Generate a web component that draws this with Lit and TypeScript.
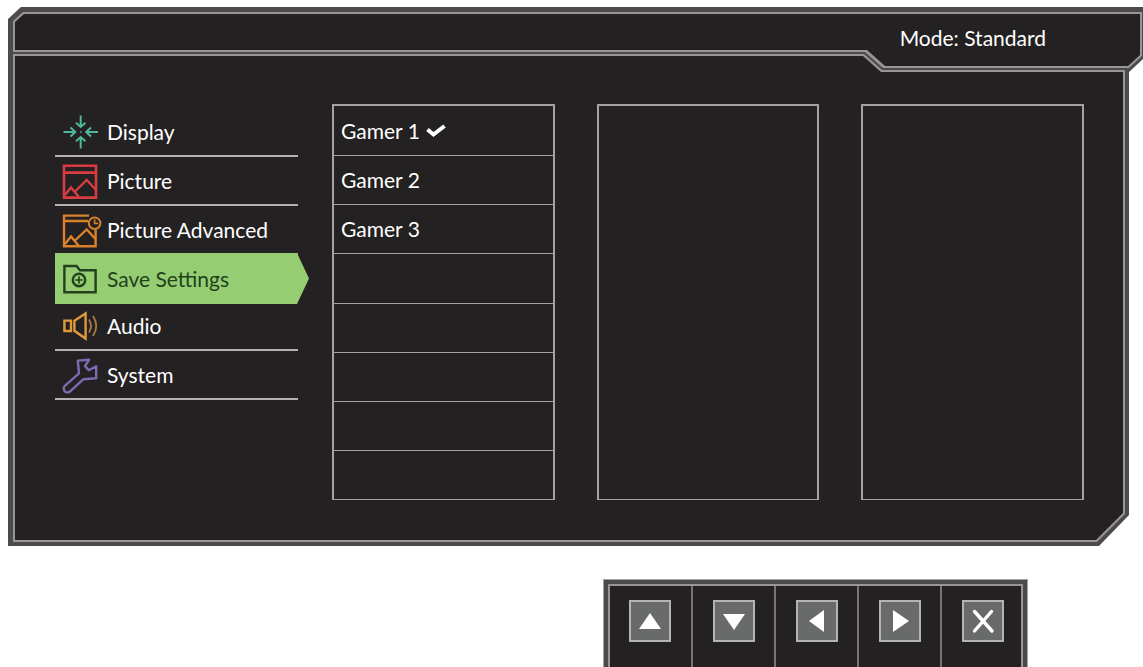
import { LitElement, html, css, svg } from "lit";
import { customElement, property, state } from "lit/decorators.js";
import { classMap } from "lit/directives/class-map.js";

const icons: Record<string, unknown> = {
  display: svg`<g stroke="#4fb79c" stroke-width="2">
    <path d="M1.5 20H13M8.5 15.5L13.3 20L8.5 24.5M36 20H24.5M29 15.5L24.2 20L29 24.5"/>
    <path d="M18.7 3.5V15M14 10.7L18.7 15L23.4 10.7M18.7 36.5V25M14 29.3L18.7 25L23.4 29.3"/>
    <path d="M18 20H19.5" stroke-width="1.5"/></g>`,
  picture: svg`<g stroke="#d63c41" stroke-width="2.6">
    <path d="M2 4.8H34V36.6H2ZM2 11.6H34"/>
    <path d="M3 34L9 26.5L16.5 35.5M12.5 31L24.7 19L34 29" stroke-width="2.4"/></g>`,
  advanced: svg`<g stroke="#d9822b" stroke-width="2.4">
    <path d="M27 5.6H2V36.2H33.6V20M2 11H26"/>
    <path d="M3 34L9 26.5L16.5 35.5M12.5 31L24.7 19.5L33.5 29"/>
    <circle cx="32.6" cy="13.2" r="5.8" stroke-width="2"/>
    <path d="M32.6 9.5V13.4H36" stroke-width="1.6"/></g>`,
  save: svg`<g stroke="#21421a" stroke-width="2.4">
    <path d="M2.4 7H14.5L18 11.2H33.6V33.2H2.4Z"/>
    <circle cx="17" cy="21" r="6.2"/>
    <path d="M17 17.3V24.7M13.3 21H20.7" stroke-width="1.6"/></g>`,
  audio: svg`<g stroke="#e09a3c" stroke-width="2.4">
    <path d="M2.4 14.6H9V25H2.4ZM12.4 14.8L23.6 7.5V32.6L12.4 24.8Z"/>
    <path d="M27 13.5Q31 20 27 26.5M31 10Q37.5 20 31 30" stroke="#a97c42" stroke-width="1.8"/></g>`,
  system: svg`<path stroke="#8069b3" stroke-width="2.4" stroke-linejoin="round"
    d="M15.8 5.6L27 4.8L23 11.2L26.8 15.2L34.2 11.2V23.2L21.5 24.2L8.4 36.2A3.8 3.8 0 0 1 2.8 30.8L17 18.4Z"/>`,
};

const menu = [
  { icon: "display", label: "Display" },
  { icon: "picture", label: "Picture" },
  { icon: "advanced", label: "Picture Advanced" },
  { icon: "save", label: "Save Settings" },
  { icon: "audio", label: "Audio" },
  { icon: "system", label: "System" },
];

const options = ["Gamer 1", "Gamer 2", "Gamer 3", "", "", "", "", ""];

const keys = [
  { label: "Up", shape: svg`<path d="M17 9L28 25H6Z"/>` },
  { label: "Down", shape: svg`<path d="M6 10H28L17 26Z"/>` },
  { label: "Left", shape: svg`<path d="M24 6V28L9 17Z"/>` },
  { label: "Right", shape: svg`<path d="M10 6V28L26 17Z"/>` },
  {
    label: "Exit",
    shape: svg`<path d="M8.5 7.5L26 27M25.5 7.5L8.5 27" stroke="#fff" stroke-width="3.4" stroke-linecap="round"/>`,
  },
];

@customElement("osd-frame")
class OsdFrame extends LitElement {
  static styles = css`
    :host {
      display: grid;
    }
    .layer,
    .content {
      grid-area: 1 / 1;
      min-width: 0;
    }
    .content {
      z-index: 1;
    }
    .edge {
      background: #4c4a4b;
      clip-path: polygon(0 12px, 13px 0, 100% 0, 100% 52px, calc(100% - 14px) 65px,
        calc(100% - 14px) calc(100% - 31px), calc(100% - 44px) 100%, 0 100%);
    }
    .line {
      background: #979596;
    }
    .fill {
      background: #242122;
    }
    .line.head {
      clip-path: polygon(5px 14px, 15px 5px, calc(100% - 1px) 5px, calc(100% - 1px) 49px,
        calc(100% - 14px) 61px, calc(100% - 260px) 61px, calc(100% - 278px) 45px, 5px 45px);
    }
    .fill.head {
      clip-path: polygon(7px 15px, 16px 7px, calc(100% - 3px) 7px, calc(100% - 3px) 48px,
        calc(100% - 15px) 59px, calc(100% - 258px) 59px, calc(100% - 276px) 43px, 7px 43px);
    }
    .line.body {
      clip-path: polygon(5px 47px, calc(100% - 279px) 47px, calc(100% - 261px) 63px,
        calc(100% - 18px) 63px, calc(100% - 18px) calc(100% - 32px),
        calc(100% - 46px) calc(100% - 4px), 5px calc(100% - 4px));
    }
    .fill.body {
      clip-path: polygon(7px 49px, calc(100% - 280px) 49px, calc(100% - 262px) 65px,
        calc(100% - 20px) 65px, calc(100% - 20px) calc(100% - 33px),
        calc(100% - 47px) calc(100% - 6px), 7px calc(100% - 6px));
    }
  `;
  render() {
    return html`
      <div class="layer edge"></div>
      <div class="layer line head"></div>
      <div class="layer fill head"></div>
      <div class="layer line body"></div>
      <div class="layer fill body"></div>
      <div class="content"><slot></slot></div>
    `;
  }
}

@customElement("osd-menu")
class OsdMenu extends LitElement {
  @property({ type: Number }) selected = 0;
  static styles = css`
    :host {
      display: block;
    }
    .list {
      list-style: none;
      margin: 0;
      padding: 0;
    }
    .item {
      box-sizing: border-box;
      height: 49px;
      border-bottom: 2px solid #b3b1b2;
    }
    .button {
      display: flex;
      align-items: center;
      gap: 5px;
      box-sizing: border-box;
      width: 100%;
      height: 100%;
      border: 0;
      padding: 0 0 0 7px;
      background: none;
      color: #fff;
      font: inherit;
      white-space: nowrap;
      text-align: left;
      cursor: pointer;
    }
    .button.active {
      width: calc(100% + 11px);
      height: 51px;
      margin: -2px 0;
      background: #96cd73;
      color: #21421a;
      clip-path: polygon(0 0, calc(100% - 12px) 0, 100% 50%, calc(100% - 12px) 100%, 0 100%);
    }
    .icon {
      flex: none;
      width: 40px;
      height: 40px;
      fill: none;
    }
  `;
  render() {
    return html`<ul class="list">
      ${menu.map(
        (m, i) => html`<li class="item">
          <button
            class=${classMap({ button: true, active: i === this.selected })}
            @click=${() => this.dispatchEvent(new CustomEvent("pick", { detail: i }))}
          >
            <svg class="icon" viewBox="0 0 40 40" aria-hidden="true">${icons[m.icon]}</svg>
            <span>${m.label}</span>
          </button>
        </li>`
      )}
    </ul>`;
  }
}

@customElement("app-root")
class AppRoot extends LitElement {
  @state() private section = 3;
  @state() private slotIndex = 0;

  static styles = css`
    :host {
      display: flex;
      flex-direction: column;
      box-sizing: border-box;
      min-height: 100vh;
      padding-top: 7px;
      background: #fff;
      color: #fff;
      font-family: Lato, "Liberation Sans", sans-serif;
      font-size: 21px;
      line-height: 26px;
    }
    .frame {
      margin-left: 8px;
    }
    .mode {
      padding: 18px 97px 18px 47px;
      text-align: right;
    }
    .body {
      display: grid;
      grid-template-columns: 243fr 752fr;
      gap: 34px;
      padding: 35px 59px 46px 47px;
    }
    .nav {
      padding-top: 4px;
    }
    .panels {
      display: grid;
      grid-template-columns: repeat(3, 1fr);
      gap: 42px;
      min-height: 396px;
    }
    .panel {
      box-sizing: border-box;
      margin: 0;
      padding: 0;
      border: 2px solid #a3a1a2;
      border-bottom-width: 1px;
      list-style: none;
    }
    .options {
      display: grid;
      grid-template-rows: repeat(8, 1fr);
    }
    .option + .option {
      border-top: 1px solid #a3a1a2;
    }
    .choice {
      display: flex;
      align-items: center;
      gap: 6px;
      width: 100%;
      height: 100%;
      border: 0;
      padding: 0 7px;
      background: none;
      color: inherit;
      font: inherit;
      cursor: pointer;
    }
    .check {
      width: 20px;
      height: 14px;
      fill: none;
      stroke: #fff;
      stroke-width: 4;
    }
    .keys {
      display: grid;
      grid-template-columns: repeat(5, 83px);
      flex: 1;
      align-self: flex-end;
      margin: 34px 116px 0 0;
      border: 4px solid #4c4a4b;
      border-bottom: 0;
      outline: 1px solid #a3a1a2;
      background: #242122;
      box-shadow: inset 0 2px #979596, inset 2px 0 #979596, inset -2px 0 #979596;
    }
    .cell {
      display: flex;
      justify-content: center;
      align-items: flex-start;
      padding-top: 16px;
    }
    .cell + .cell {
      border-left: 2px solid #777576;
      margin-top: 2px;
      padding-top: 14px;
    }
    .key {
      box-sizing: border-box;
      width: 42px;
      height: 42px;
      border: 2px solid #b5b4b4;
      padding: 2px;
      background: #696a6a;
      cursor: pointer;
    }
    .glyph {
      display: block;
      width: 34px;
      height: 34px;
      fill: #fff;
    }
  `;

  render() {
    return html`
      <osd-frame class="frame">
        <div class="mode">Mode: Standard</div>
        <div class="body">
          <nav class="nav">
            <osd-menu
              .selected=${this.section}
              @pick=${(e: CustomEvent) => (this.section = e.detail)}
            ></osd-menu>
          </nav>
          <div class="panels">
            <ul class="panel options">
              ${options.map(
                (o, i) => html`<li class="option">
                  ${o
                    ? html`<button class="choice" @click=${() => (this.slotIndex = i)}>
                        <span>${o}</span>
                        ${i === this.slotIndex
                          ? html`<svg class="check" viewBox="0 0 20 14" aria-hidden="true">
                              <path d="M1.5 5.5L7.5 10.5L18.5 2" />
                            </svg>`
                          : ""}
                      </button>`
                    : ""}
                </li>`
              )}
            </ul>
            <div class="panel"></div>
            <div class="panel"></div>
          </div>
        </div>
      </osd-frame>
      <div class="keys">
        ${keys.map(
          (k) => html`<div class="cell">
            <button class="key" aria-label=${k.label}>
              <svg class="glyph" viewBox="0 0 34 34" aria-hidden="true">${k.shape}</svg>
            </button>
          </div>`
        )}
      </div>
    `;
  }
}
